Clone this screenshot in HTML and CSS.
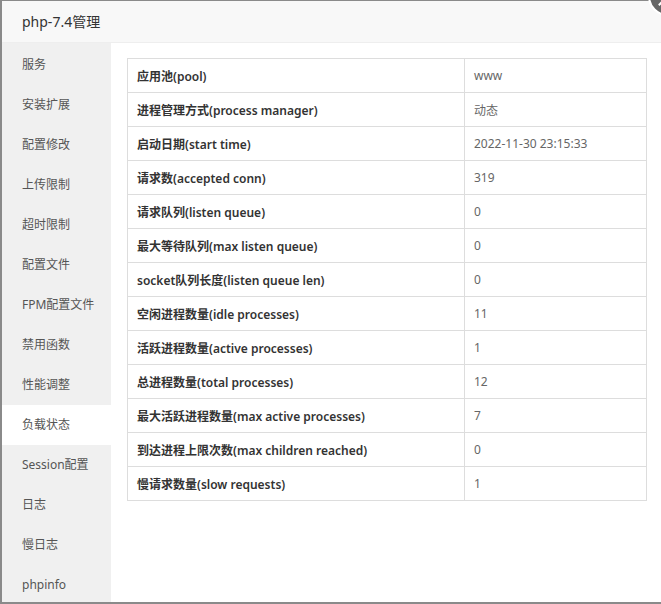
FILE: index.html
```html
<!DOCTYPE html>
<html>
<head>
<meta charset="utf-8">
<link rel="stylesheet" href="styles.css">
</head>
<body>
<div class="dialog">
  <div class="header">php-7.4管理</div>
  <span class="close"></span>
  <div class="main">
    <ul class="menu">
      <li>服务</li>
      <li>安装扩展</li>
      <li>配置修改</li>
      <li>上传限制</li>
      <li>超时限制</li>
      <li>配置文件</li>
      <li>FPM配置文件</li>
      <li>禁用函数</li>
      <li>性能调整</li>
      <li class="active">负载状态</li>
      <li>Session配置</li>
      <li>日志</li>
      <li>慢日志</li>
      <li>phpinfo</li>
    </ul>
    <div class="content">
      <table class="status">
        <tr><th>应用池(pool)</th><td>www</td></tr>
        <tr><th>进程管理方式(process manager)</th><td>动态</td></tr>
        <tr><th>启动日期(start time)</th><td>2022-11-30 23:15:33</td></tr>
        <tr><th>请求数(accepted conn)</th><td>319</td></tr>
        <tr><th>请求队列(listen queue)</th><td>0</td></tr>
        <tr><th>最大等待队列(max listen queue)</th><td>0</td></tr>
        <tr><th>socket队列长度(listen queue len)</th><td>0</td></tr>
        <tr><th>空闲进程数量(idle processes)</th><td>11</td></tr>
        <tr><th>活跃进程数量(active processes)</th><td>1</td></tr>
        <tr><th>总进程数量(total processes)</th><td>12</td></tr>
        <tr><th>最大活跃进程数量(max active processes)</th><td>7</td></tr>
        <tr><th>到达进程上限次数(max children reached)</th><td>0</td></tr>
        <tr><th>慢请求数量(slow requests)</th><td>1</td></tr>
      </table>
    </div>
  </div>
</div>
</body>
</html>
```
FILE: styles.css
```css
html, body {
  margin: 0;
  padding: 0;
  height: 604px;
  overflow: hidden;
}
body {
  background: #8a8a8a;
  font-family: "Noto Sans", "Noto Sans CJK SC", sans-serif;
}
.dialog {
  position: relative;
  margin: 1px 0 0 2px;
  height: 601px;
  background: #fff;
  display: flex;
  flex-direction: column;
}
.header {
  height: 41px;
  line-height: 41px;
  background: #f8f8f8;
  border-bottom: 1px solid #eee;
  padding-left: 20px;
  font-size: 14px;
  color: #333;
  flex: none;
}
.close {
  position: absolute;
  top: -25px;
  right: -27px;
  width: 36px;
  height: 36px;
  border-radius: 50%;
  background: #666;
  border: 2px solid #fff;
}
.close::before, .close::after {
  content: "";
  position: absolute;
  left: 5px;
  top: 17px;
  width: 26px;
  height: 2px;
  background: #fff;
  transform: rotate(45deg);
}
.close::after {
  transform: rotate(-45deg);
}
.main {
  display: flex;
  flex: 1;
  min-height: 0;
}
.menu {
  list-style: none;
  margin: 0;
  padding: 2px 0 0;
  width: 109px;
  background: #f0f0f0;
  flex: none;
}
.menu li {
  height: 40px;
  line-height: 40px;
  padding-left: 20px;
  font-size: 12px;
  color: #555;
}
.menu li.active {
  background: #fff;
}
.content {
  flex: 1;
  padding: 15px 14px 0 16px;
}
.status {
  width: 520px;
  border-collapse: collapse;
  font-size: 12px;
}
.status th, .status td {
  border: 1px solid #ddd;
  height: 33px;
  padding: 0 9px;
  text-align: left;
}
.status th {
  width: 318px;
  font-weight: 600;
  color: #333;
}
.status td {
  color: #666;
  font-weight: 400;
}
```
